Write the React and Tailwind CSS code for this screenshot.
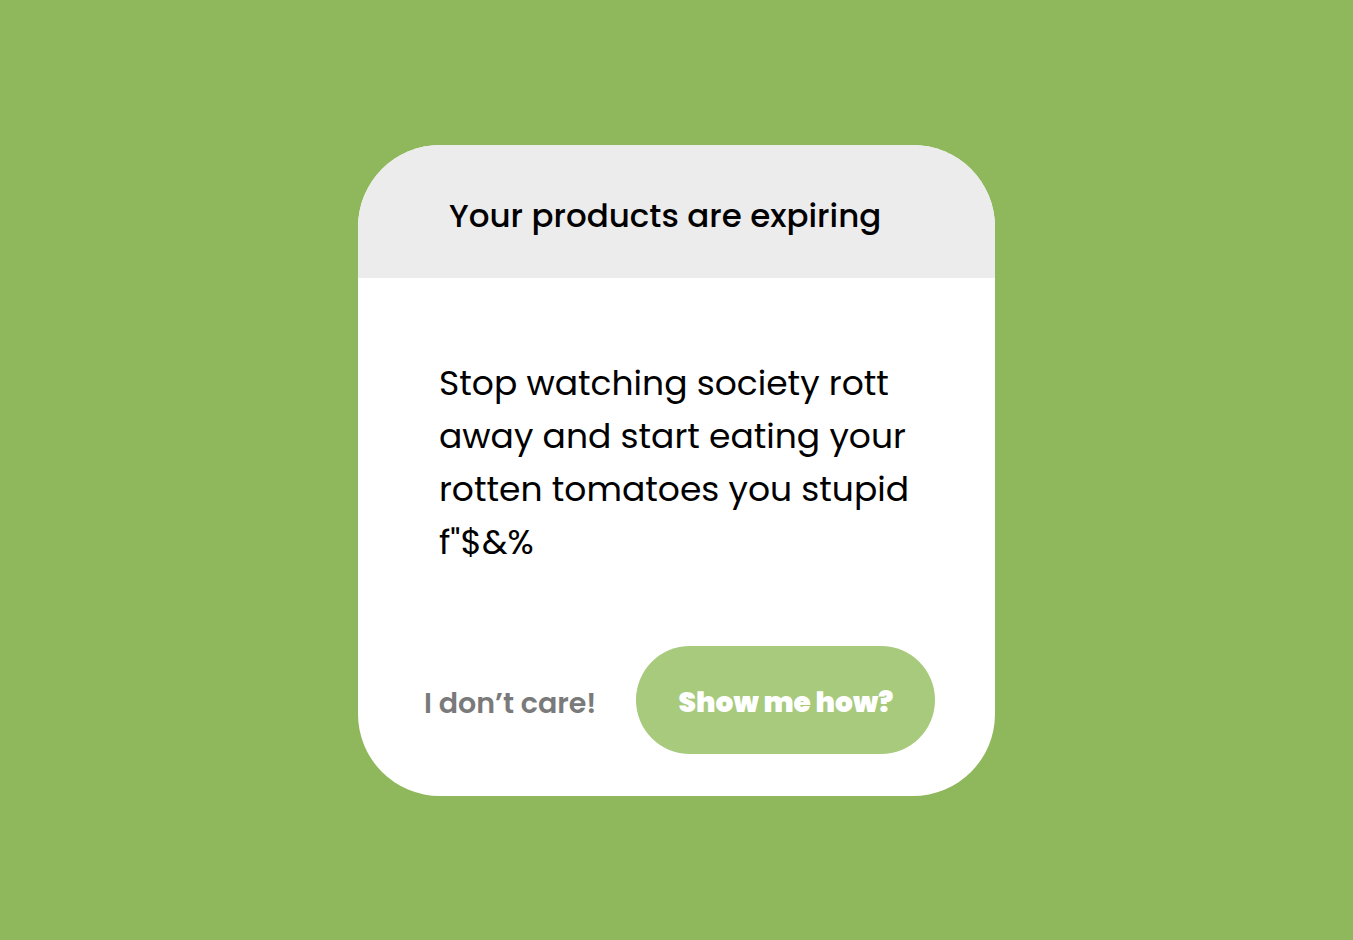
export default function App() {
  const font = { fontFamily: 'Poppins, "Open Sans", sans-serif' };
  return (
    <div className="w-[1353px] h-[940px] bg-[#8fb75b] flex items-center justify-center" style={font}>
      <div className="w-[637px] h-[651px] rounded-[82px] bg-white overflow-hidden flex flex-col mt-[1px]">
        <div className="h-[133px] bg-[#ececec] flex items-center pl-[91px] pt-[10px]">
          <span className="text-[32.5px] font-medium text-black">Your products are expiring</span>
        </div>
        <div className="flex-1 flex flex-col pl-[81px] pr-[40px] pt-[79px]">
          <p className="text-[34.5px] leading-[53px] text-black whitespace-nowrap">
            Stop watching society rott<br />away and start eating your<br />rotten tomatoes you stupid<br />f"$&amp;%
          </p>
          <div className="flex items-center mt-[77px] -ml-[15px] gap-[40px]">
            <span className="text-[28.5px] font-semibold text-[#7a7a7a] pt-[6px]">I don’t care!</span>
            <button className="w-[299px] h-[108px] rounded-full bg-[#a7ca7c] text-white text-[28px] font-black pt-[6px]">
              Show me how?
            </button>
          </div>
        </div>
      </div>
    </div>
  );
}
